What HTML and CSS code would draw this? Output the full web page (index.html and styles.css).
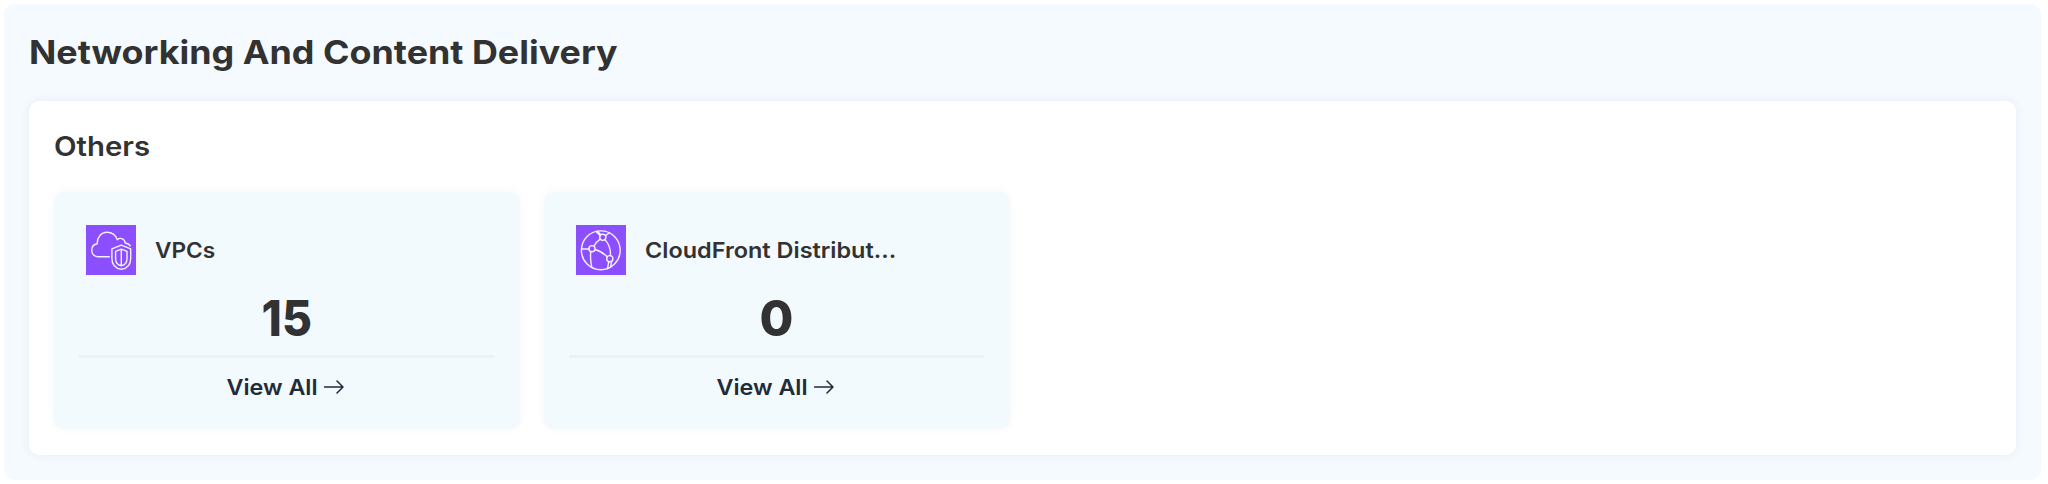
FILE: index.html
```html
<!DOCTYPE html>
<html lang="en">
<head>
<meta charset="utf-8">
<title>Networking And Content Delivery</title>
<link rel="stylesheet" href="styles.css">
</head>
<body>
<section class="section">
  <h1 class="section-title"><span>Networking And Content Delivery</span></h1>
  <div class="panel">
    <h2 class="panel-title"><span>Others</span></h2>
    <div class="cards">
      <article class="card">
        <header class="card-head">
          <svg class="icon" viewBox="0 0 50 50">
            <rect width="50" height="50" fill="#8c4fff"/>
            <g fill="none" stroke="#fff" stroke-width="1.4" stroke-linejoin="round" stroke-linecap="round" stroke-opacity=".92">
              <path d="M23.300 31.700H12.500C8.500 31.700 5.700 29 5.700 25.300C5.700 21.800 7.700 19.300 11.300 18.700C10.800 12.500 15.200 7.300 21 7.300C26.300 7.300 29.800 10.500 31.300 14.700C33.800 12.300 38.300 13.300 39.300 18C41.800 18.400 43.500 19.500 44.300 20.800"/>
              <path d="M35.300 20.200L44.700 23.800V33.500C44.700 39.500 41 43.500 35.300 44.300C29.600 43.500 25.900 39.500 25.900 33.500V23.800Z"/>
              <path d="M35.300 24.200L41 26.400V33.500C41 37.500 39 40 35.300 40.700C31.600 40 29.600 37.500 29.600 33.500V26.400ZM35.300 24.200V40.700"/>
            </g>
          </svg>
          <h3 class="name">VPCs</h3>
        </header>
        <p class="count"><span class="count-pair">15</span></p>
        <a class="view"><span class="view-text">View All</span>
          <svg class="arrow" viewBox="0 0 20 14"><path d="M.5 7H19M13 1L19 7L13 13"/></svg></a>
      </article>
      <article class="card">
        <header class="card-head">
          <svg class="icon" viewBox="0 0 50 50">
            <rect width="50" height="50" fill="#8c4fff"/>
            <g fill="none" stroke="#fff" stroke-width="1.4" stroke-linecap="round" stroke-opacity=".92">
              <circle cx="24.800" cy="25.300" r="19.400"/>
              <circle cx="26.800" cy="12.300" r="3.100"/>
              <circle cx="16" cy="23.700" r="3.100"/>
              <circle cx="33.800" cy="33.700" r="3.100"/>
              <path d="M6 24H12.900M18 21.200C19.500 18.300 21.500 16 24.200 14.200M29 14.600C33 19 34.800 24.500 34.400 30.400M19 24.500C23.500 25.600 27.500 28.200 31.200 31.700M14.800 26.700C14.200 31.500 14.500 36.500 15.800 42.300M32.700 36.800L31.500 43.500M35.500 36.500L34.700 42M20 6.600L24.200 10.500M33.500 7.800L29.500 10.600M21.500 6.500C22.500 7.500 23 8.200 24.200 8.800"/>
            </g>
          </svg>
          <h3 class="name name-long">CloudFront Distribut...</h3>
        </header>
        <p class="count"><span>0</span></p>
        <a class="view"><span class="view-text">View All</span>
          <svg class="arrow" viewBox="0 0 20 14"><path d="M.5 7H19M13 1L19 7L13 13"/></svg></a>
      </article>
    </div>
  </div>
</section>
</body>
</html>
```
FILE: styles.css
```css
* { box-sizing: border-box; margin: 0; }
body {
  background: #fff;
  color: #323232;
  font-family: Inter, "Open Sans", sans-serif;
  padding: 4px 7px 4px 4px;
}
.section {
  height: 476px;
  padding: 24px 25px 25px;
  background: #f5faff;
  border-radius: 10px;
}
.section-title span,
.panel-title span {
  display: inline-block;
  transform: scaleX(1.087);
  transform-origin: left;
}
.section-title {
  height: 73px;
  font-size: 33px;
  line-height: 49px;
  font-weight: 700;
  white-space: nowrap;
}
.panel {
  height: 354px;
  padding: 25px 24px 26px 25px;
  background: #fff;
  border-radius: 10px;
  box-shadow: 0 0 10px rgba(40, 80, 110, .08);
}
.panel-title {
  height: 66px;
  font-size: 27px;
  line-height: 42px;
  font-weight: 600;
}
.cards {
  display: grid;
  grid-template-columns: 466px 466px;
  gap: 24px;
}
.card {
  height: 237px;
  padding: 32px 26px 0 25px;
  background: #f2fafe;
  border-radius: 10px;
  box-shadow: 0 0 8px rgba(0, 0, 0, .04);
}
.card-head {
  display: flex;
  align-items: center;
  gap: 19px;
  height: 51px;
  padding-left: 7px;
}
.icon { width: 50px; height: 50px; }
.name {
  font-size: 22px;
  font-weight: 600;
  line-height: 30px;
  white-space: nowrap;
  transform: scaleX(1.03);
  transform-origin: left;
}
.name-long { transform: scaleX(1.066); }
.count {
  height: 83px;
  border-bottom: 3px solid #f0f0f0;
  text-align: center;
  font-size: 49px;
  font-weight: 800;
  line-height: 88px;
}
.count-pair {
  display: inline-block;
  transform: scaleX(.94);
}
.view {
  display: flex;
  align-items: center;
  justify-content: center;
  gap: 10px;
  height: 58px;
  color: #212b3a;
}
.view-text {
  font-size: 22px;
  font-weight: 600;
  line-height: 30px;
  transform: scaleX(1.06);
}
.arrow {
  width: 20px;
  height: 14px;
  fill: none;
  stroke: #212b3a;
  stroke-width: 1.5;
  stroke-linecap: round;
  stroke-linejoin: round;
}
```
